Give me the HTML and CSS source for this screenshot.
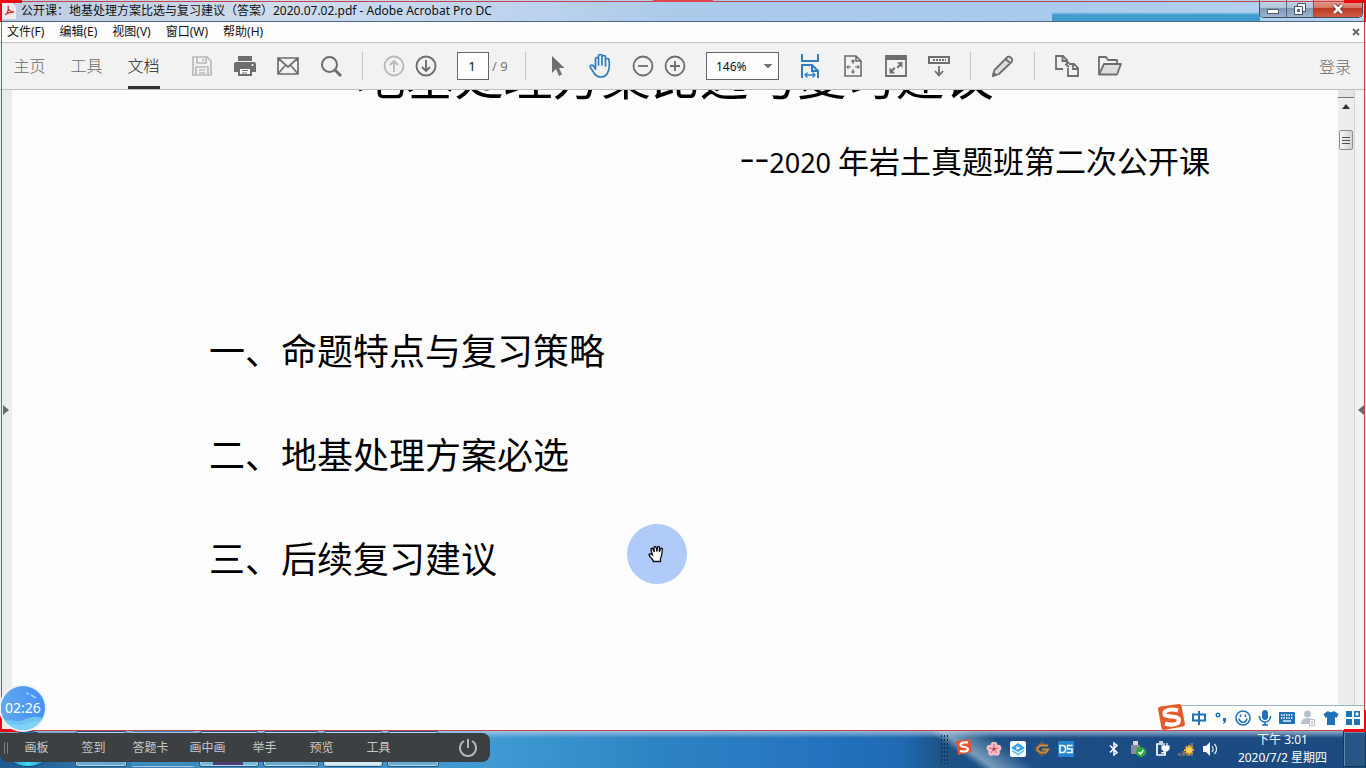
FILE: index.html
```html
<!DOCTYPE html>
<html lang="zh-CN">
<head>
<meta charset="utf-8">
<title>公开课:地基处理方案比选与复习建议 - Adobe Acrobat Pro DC</title>
<link rel="stylesheet" href="styles.css">
</head>
<body>
<div class="window">
  <header class="titlebar">
    <svg class="pdf-icon" width="14" height="16" viewBox="0 0 14 16"><path d="M0 0h10l4 4v12H0z" fill="#f6e9ec"/><path d="M3 12c3-2 4-6 3-9 0 4 2 6 6 6-4 0-7 1-9 3" fill="none" stroke="#d8343a" stroke-width="1.3"/></svg>
    <h1 class="title">公开课：地基处理方案比选与复习建议（答案）2020.07.02.pdf - Adobe Acrobat Pro DC</h1>
    <div class="win-controls">
      <button class="win-btn" aria-label="最小化"><svg width="14" height="12" viewBox="0 0 14 12"><rect x="1.500" y="6.500" width="11" height="4" fill="#fff" stroke="#4d5c70"/></svg></button>
      <button class="win-btn" aria-label="还原"><svg width="14" height="14" viewBox="0 0 14 14"><path d="M4.500 1.500h8v8h-8z" fill="#fff" stroke="#44536a"/><path d="M1.500 4.500h8v8h-8z" fill="#fff" stroke="#44536a"/><path d="M4.500 7.500h2v2h-2z" fill="#8ea5c2" stroke="#44536a"/></svg></button>
      <button class="win-btn close" aria-label="关闭"><svg width="14" height="12" viewBox="0 0 14 12"><path d="M3 2l8 8M11 2l-8 8" stroke="#6d2b2b" stroke-width="4.500"/><path d="M3 2l8 8M11 2l-8 8" stroke="#fff" stroke-width="2.600"/></svg></button>
    </div>
  </header>

  <nav class="menubar">
    <button>文件(F)</button><button>编辑(E)</button><button>视图(V)</button><button>窗口(W)</button><button>帮助(H)</button>
    <button class="doc-close" aria-label="关闭文档"><svg width="8" height="8" viewBox="0 0 8 8"><path d="M1 1l6 6M7 1L1 7" stroke="#666" stroke-width="1.800"/></svg></button>
  </nav>

  <div class="toolbar">
    <div class="tabs"><button>主页</button><button>工具</button><button class="active">文档</button></div>
    <div class="tools files">
      <button aria-label="保存"><svg width="22" height="22" viewBox="0 0 22 22" fill="none" stroke="#b9b9b9" stroke-width="1.700"><path d="M2 2h14l4 4v14H2zM6 2v6h9V2M5 20v-8h12v8M8 15h6M8 18h6M12 4v2"/></svg></button>
      <button aria-label="打印"><svg width="24" height="22" viewBox="0 0 24 22"><path d="M5 1h14v5H5zM3 7h18a2 2 0 0 1 2 2v8h-4v-4H5v4H1V9a2 2 0 0 1 2-2z" fill="#6e6e6e"/><path d="M6 13h12v7H6z" fill="#fff" stroke="#6e6e6e" stroke-width="2"/><path d="M9 15.500h6M9 18h5" stroke="#6e6e6e"/><circle cx="19.500" cy="10" r="1" fill="#fff"/></svg></button>
      <button aria-label="邮件"><svg width="24" height="22" viewBox="0 0 24 22" fill="none" stroke="#6e6e6e" stroke-width="1.700"><path d="M2 3h20v16H2zM2 3l10 9 10-9M2 19l7.500-9M22 19l-7.500-9"/></svg></button>
      <button aria-label="搜索"><svg width="22" height="22" viewBox="0 0 22 22" fill="none" stroke="#6e6e6e"><circle cx="9.500" cy="9.500" r="7.500" stroke-width="2"/><path d="M15 15l6 6" stroke-width="3"/></svg></button>
    </div>
    <span class="sep"></span>
    <div class="tools narrow">
      <button aria-label="上一页"><svg width="22" height="22" viewBox="0 0 22 22" fill="none" stroke="#b9b9b9" stroke-width="1.800"><circle cx="11" cy="11" r="9.500"/><path d="M11 17V6M7 10l4-4 4 4"/></svg></button>
      <button aria-label="下一页"><svg width="22" height="22" viewBox="0 0 22 22" fill="none" stroke="#6e6e6e" stroke-width="1.900"><circle cx="11" cy="11" r="9.500"/><path d="M11 5v11M7 12l4 4 4-4"/></svg></button>
    </div>
    <input class="page-input" id="page" type="text" value="1" aria-label="页码">
    <label class="page-total" for="page">/ 9</label>
    <span class="sep"></span>
    <div class="tools">
      <button aria-label="选择"><svg width="14" height="22" viewBox="0 0 14 22"><path d="M1 1v17l4-4 3 7 3-1.500-3-6.500h5.500z" fill="#6e6e6e"/></svg></button>
      <button aria-label="手形工具"><svg width="24" height="26" viewBox="0 0 24 26" fill="none" stroke="#2e7fc1" stroke-width="1.700" stroke-linejoin="round" stroke-linecap="round"><path d="M6.500 14V6c0-2 3-2 3 0v6V3c0-2 3.500-2 3.500 0v9V4c0-2 3.500-2 3.500 0v9V7c0-2 3.500-2 3.500 0 .8 6 .5 10-1.500 13-1.500 3-3.500 4-6.500 4-4 0-5.500-1.500-7-4L1.500 14.500C.5 12.500 3 11 4.500 13l2 3z"/></svg></button>
    </div>
    <div class="tools narrow">
      <button aria-label="缩小"><svg width="22" height="22" viewBox="0 0 22 22" fill="none" stroke="#6e6e6e" stroke-width="1.800"><circle cx="11" cy="11" r="9.500"/><path d="M6 11h10"/></svg></button>
      <button aria-label="放大"><svg width="22" height="22" viewBox="0 0 22 22" fill="none" stroke="#6e6e6e" stroke-width="1.800"><circle cx="11" cy="11" r="9.500"/><path d="M6 11h10M11 6v10"/></svg></button>
    </div>
    <select class="zoom" aria-label="缩放比例"><option>146%</option></select>
    <div class="tools views">
      <button aria-label="适合宽度"><svg width="20" height="26" viewBox="0 0 20 26" fill="none" stroke="#2e7fc1" stroke-width="2"><path d="M2 1v7h16V1M2 25V12h10l6 6v7M12 12v6h6"/><path d="M5 22h10M7.500 19.500L5 22l2.500 2.500M12.500 19.500L15 22l-2.500 2.500" stroke-width="1.300"/></svg></button>
      <button aria-label="适合页面"><svg width="18" height="22" viewBox="0 0 18 22" fill="none" stroke="#6e6e6e" stroke-width="1.600"><path d="M1 1h11l5 5v15H1zM12 1v5h5"/><path d="M9 5v4M7.500 6.500L9 5l1.500 1.500M9 18v-4M7.500 16.500L9 18l1.500-1.500M3 12h4M4.500 10.500L3 12l1.500 1.500M15 12h-4M13.500 10.500L15 12l-1.500 1.500" stroke-width="1.200"/></svg></button>
      <button aria-label="全屏"><svg width="22" height="22" viewBox="0 0 22 22"><path d="M1 1h20v20H1z" fill="none" stroke="#6e6e6e" stroke-width="1.800"/><path d="M1 1h20v4H1z" fill="#6e6e6e"/><path d="M17.500 7v6l-2-2-2.500 2.500-1.500-1.500L14 9.500 12 7.500zM4.500 18.500v-6l2 2L9 12l1.500 1.500L8 16l2 2.500z" fill="#6e6e6e"/></svg></button>
      <button aria-label="阅读模式"><svg width="22" height="22" viewBox="0 0 22 22" fill="none" stroke="#6e6e6e"><rect x="1" y="2" width="20" height="6" stroke-width="2"/><path d="M5 5h13" stroke-width="2" stroke-dasharray="2 1"/><path d="M11 11v10M7 16l4 4.500 4-4.500" stroke-width="1.800"/></svg></button>
    </div>
    <span class="sep"></span>
    <div class="tools"><button aria-label="批注"><svg width="22" height="22" viewBox="0 0 22 22" fill="#ddd" stroke="#6e6e6e" stroke-width="1.800" stroke-linejoin="round"><path d="M1 21l1.500-6L15 2.500c2-2.500 7 1.500 4.500 4.500L7 19zM13.500 4l5 4.500"/><path d="M1 21l.6-3 2.400 2z" fill="#6e6e6e"/></svg></button></div>
    <span class="sep"></span>
    <div class="tools">
      <button aria-label="转换"><svg width="24" height="22" viewBox="0 0 24 22" fill="none" stroke="#6e6e6e" stroke-width="1.800"><path d="M8 14H1V1h7l4 4v3M7.500 1v5H12M13 13v8h10v-8l-4-4h-5M18 9v5h5M14 7l-3 2.500 3 2.500"/></svg></button>
      <button aria-label="打开"><svg width="24" height="20" viewBox="0 0 24 20" fill="none" stroke="#6e6e6e" stroke-width="1.800" stroke-linejoin="round"><path d="M1 18V1h7l2 3h9v4"/><path d="M1 18.500L6 8h17l-4 10.500z" fill="#ddd"/></svg></button>
    </div>
    <a class="login" href="#login">登录</a>
  </div>

  <main class="viewer">
    <button class="gutter left" aria-label="展开导航窗格"><svg width="6" height="10" viewBox="0 0 6 10"><path d="M0 0l6 5-6 5z" fill="#6b6b6b"/></svg></button>
    <article class="page">
      <h2 class="doc-title">地基处理方案比选与复习建议</h2>
      <p class="subtitle"><span class="dashes">--</span><span class="year">2020</span> 年岩土真题班第二次公开课</p>
      <div class="outline">
        <p>一、命题特点与复习策略</p>
        <p>二、地基处理方案必选</p>
        <p>三、后续复习建议</p>
      </div>
    </article>
    <div class="scrollbar">
      <span class="split"></span>
      <button class="scroll-up" aria-label="向上滚动"><svg width="8" height="5" viewBox="0 0 8 5"><path d="M0 5l4-5 4 5z" fill="#333"/></svg></button>
      <span class="thumb"><svg width="8" height="9" viewBox="0 0 8 9"><path d="M0 1.500h8M0 4.500h8M0 7.500h8" stroke="#555"/></svg></span>
    </div>
    <button class="gutter right" aria-label="展开工具窗格"><svg width="6" height="10" viewBox="0 0 6 10"><path d="M6 0L0 5l6 5z" fill="#6b6b6b"/></svg></button>
  </main>
</div>

<footer class="taskbar">
  <div class="tasks">
    <span class="orb"></span><span class="task"></span><span class="task pale"></span><span class="task purple"></span><span class="task dim"></span><span class="task light"></span><span class="task"></span>
  </div>
  <div class="tray">
    <span class="grip"></span>
    <svg class="sogou-tray" width="18" height="18" viewBox="0 0 18 18"><path d="M1 3l14-2 2 13-14 3z" fill="#e8532b"/><path d="M13 4.500C9 4 5.500 4.500 5.500 7S13 8.500 13 11s-4 3-8 2" fill="none" stroke="#fff" stroke-width="2.200"/></svg>
    <div class="tray-icons">
      <svg width="16" height="16" viewBox="0 0 16 16"><g fill="#f7bcc4"><circle cx="8" cy="4" r="3.300"/><circle cx="12" cy="7" r="3.300"/><circle cx="10.500" cy="11.500" r="3.300"/><circle cx="5.500" cy="11.500" r="3.300"/><circle cx="4" cy="7" r="3.300"/></g><path d="M8 8V3M8 8l4-1M8 8l3 4M8 8l-3 4M8 8L3 7" stroke="#d8607b"/><circle cx="8" cy="8" r="1.500" fill="#b9354f"/></svg>
      <svg width="16" height="16" viewBox="0 0 16 16"><rect width="16" height="16" rx="2" fill="#fff"/><path d="M8 2l7 5-7 4-7-4z" fill="#35a2ea"/><path d="M2 9.500l6 4 6-4" fill="none" stroke="#73c7f4" stroke-width="2"/><path d="M6.500 5l4 2-4 2z" fill="#fff"/></svg>
      <svg width="16" height="16" viewBox="0 0 16 16"><path d="M8 0l5 4H3zM8 16l5-4H3zM0 8l3-4v8z" fill="#595b61"/><path d="M14 4.500H6L3.500 7v2L6 11.500h6l2-3H8" fill="none" stroke="#d9862b" stroke-width="2"/></svg>
      <svg width="16" height="16" viewBox="0 0 16 16"><rect width="16" height="16" rx="1" fill="#2685cf"/><path d="M2 4.500h2.500c4 0 4 7 0 7H2zM14.500 4.500h-5V8h4.500v3.500H8.500" fill="none" stroke="#fff" stroke-width="1.500"/></svg>
    </div>
    <div class="tray-icons system">
      <svg width="16" height="16" viewBox="0 0 16 16"><path d="M4 4.500l7 7L8 14V2l3 2.500-7 7" fill="none" stroke="#fff" stroke-width="1.500"/></svg>
      <svg width="16" height="16" viewBox="0 0 16 16"><path d="M3 0h5v4H3z" fill="#d5d5d5"/><path d="M1 4h9v9H1z" fill="#888f98"/><circle cx="11" cy="11" r="5" fill="#24a93a"/><path d="M8.500 11l2 2 3-4" fill="none" stroke="#fff" stroke-width="1.500"/></svg>
      <svg width="16" height="16" viewBox="0 0 16 16" fill="none" stroke="#fff" stroke-width="1.700"><path d="M9 3H3v11h8v-3M5 1h4"/><path d="M8 5h7v3l-2 2h-3L8 8zM10 2v3M13 2v3M11 10v2H7" fill="#fff" stroke-width="1.200"/></svg>
      <svg width="18" height="16" viewBox="0 0 18 16"><path d="M1 12h3v3H1zM5 10h3v5H5zM9 6h3v9H9zM13 2h3v13h-3z" fill="#69707c"/><path d="M12 4v10M7 9h10M8.500 5.500l7 7M15.500 5.500l-7 7" stroke="#eda321" stroke-width="2"/><circle cx="12" cy="9" r="3" fill="#ffd15c"/></svg>
      <svg width="16" height="16" viewBox="0 0 16 16"><path d="M1 5h3l4-4v14l-4-4H1z" fill="#fff"/><path d="M10 5c1.500 2 1.500 4 0 6M12.500 3c2.500 3 2.500 7 0 10" fill="none" stroke="#e3edf5" stroke-width="1.200"/></svg>
    </div>
    <div class="clock"><span>下午 3:01</span><span>2020/7/2 星期四</span></div>
    <button class="show-desktop" aria-label="显示桌面"></button>
  </div>
</footer>

<div class="frame"><i class="corner tl"></i><i class="corner tr"></i><i class="corner bl"></i><i class="corner br"></i><i class="top-mark"></i></div>

<div class="pointer"><svg width="18" height="18" viewBox="0 0 18 18"><path d="M5.500 16.500c-.5-2-2-3.500-4-5.500-1-1.500 0-3 1.800-1.800L4.500 10 3 5c-.3-2 1.500-2.300 2-.8L6.300 7 6 3c0-2 2-2 2.300 0L9 6.500 9.500 2.500c.2-1.700 2-1.500 2 .2l-.1 4 1-2.700c.6-1.500 2.200-1 2 .5-.5 3-.2 6-1.900 9v3z" fill="#fff" stroke="#111" stroke-width="1.300"/></svg></div>

<div class="timer"><svg class="timer-art" width="44" height="44" viewBox="0 0 44 44"><defs><clipPath id="disc"><circle cx="22" cy="22" r="22"/></clipPath><linearGradient id="sky" x1="0" x2="1"><stop stop-color="#62a8ef"/><stop offset="1" stop-color="#4590f3"/></linearGradient></defs><g clip-path="url(#disc)"><path d="M0 0h44v44H0z" fill="url(#sky)"/><path d="M0 34c12-1 14 3 22 0s12-5 22-1v11H0z" fill="#6fc6f5"/><path d="M0 36c8 0 12 4 20 3s12-5 24-4v10H0z" fill="#8bdcf9" opacity=".6"/><path d="M25 7l3 1M30 9l5 3" stroke="#a9d4ff" stroke-width="1.500"/></g></svg><span>02:26</span></div>

<div class="ime">
  <svg class="ime-logo" width="28" height="26" viewBox="0 0 28 26"><path d="M1 5q0-2 2-2.500L22 0q2 0 2.500 2L28 20q0 2-2 2.500L7 26q-2 0-2.500-2z" fill="#e55a2b"/><path d="M21 6.500C14 4.500 7 6 7.500 10S22 11 22 16s-8 5.500-14 3.500" fill="none" stroke="#fff" stroke-width="4"/></svg>
  <div class="ime-icons">
    <button aria-label="中文"><svg width="16" height="16" viewBox="0 0 16 16" fill="none" stroke="#1e73b8" stroke-width="2"><path d="M2 4.500h12v6H2zM8 1v14"/></svg></button>
    <button aria-label="标点"><svg width="16" height="16" viewBox="0 0 16 16"><circle cx="5" cy="5" r="1.800" fill="none" stroke="#1e73b8" stroke-width="1.400"/><path d="M10 8h3v3q0 2-3 3l1-3h-1z" fill="#1e73b8"/></svg></button>
    <button aria-label="表情"><svg width="16" height="16" viewBox="0 0 16 16"><circle cx="8" cy="8" r="7" fill="none" stroke="#1e73b8" stroke-width="1.600"/><path d="M4 8.500c1 5 7 5 8 0M5.500 4.500v2.500M10.500 4.500v2.500" fill="none" stroke="#1e73b8" stroke-width="1.600"/></svg></button>
    <button aria-label="语音"><svg width="14" height="16" viewBox="0 0 14 16"><rect x="4" y="0" width="6" height="10" rx="3" fill="#1e73b8"/><path d="M1.500 6c0 8 11 8 11 0M7 12v3M4 15h6" fill="none" stroke="#1e73b8" stroke-width="1.600"/></svg></button>
    <button aria-label="软键盘"><svg width="16" height="12" viewBox="0 0 16 12"><rect width="16" height="12" rx="1" fill="#1e73b8"/><path d="M2 3h12M2 6h12" stroke="#fff" stroke-width="1.500" stroke-dasharray="1.500 1"/><path d="M4 9h8" stroke="#fff" stroke-width="1.300"/></svg></button>
    <button aria-label="用户"><svg width="16" height="16" viewBox="0 0 16 16"><circle cx="6.500" cy="4" r="3.500" fill="#b7c0ca"/><path d="M0 14q0-6 6.500-6T13 14z" fill="#b7c0ca"/><rect x="8.500" y="9.500" width="5" height="6" fill="#fff" stroke="#b7c0ca"/><path d="M11 11v3" stroke="#9aa6b3"/></svg></button>
    <button aria-label="皮肤"><svg width="16" height="16" viewBox="0 0 16 16"><path d="M5 1q3 2.500 6 0l4.500 3-2 4L12 7v8H4V7L2.500 8l-2-4z" fill="#1e73b8"/></svg></button>
    <button aria-label="工具箱"><svg width="14" height="14" viewBox="0 0 14 14"><path d="M0 0h6v6H0zM0 8h6v6H0zM8 8h6v6H8z" fill="#1e73b8"/><path d="M8.800.8h4.400v4.400H8.800z" fill="none" stroke="#1e73b8" stroke-width="1.600"/></svg></button>
  </div>
</div>

<div class="dock">
  <span class="dock-grip"></span>
  <button>画板</button><button>签到</button><button>答题卡</button><button>画中画</button><button>举手</button><button>预览</button><button>工具</button>
  <button class="power" aria-label="退出"><svg width="20" height="20" viewBox="0 0 20 20" fill="none" stroke="#b5b8ba" stroke-width="2"><path d="M6 3a8 8 0 1 0 8 0M10 1v9"/></svg></button>
</div>
</body>
</html>
```
FILE: styles.css
```css
* { box-sizing: border-box; }
body {
  margin: 0;
  height: 100vh;
  display: flex;
  flex-direction: column;
  position: relative;
  overflow: hidden;
  font: 12px/16px "Noto Sans", "Noto Sans CJK SC", sans-serif;
  color: #111;
  background: #fdfdfd;
}
button { border: 0; padding: 0; margin: 0; background: none; font: inherit; color: inherit; }
svg { display: block; flex: none; }
p, h1, h2 { margin: 0; font-weight: 400; }

.window { flex: 1; min-height: 0; display: flex; flex-direction: column; }

.titlebar {
  height: 22px;
  flex: none;
  display: flex;
  align-items: center;
  gap: 5px;
  padding: 0 3px 0 2px;
  border-bottom: 1px solid #4c6684;
  background:
    linear-gradient(rgba(63, 156, 205, 0), #3f9ccd 3px) right 106px bottom 0 / 208px 9px no-repeat,
    linear-gradient(90deg, #bccbe0 0, #cfdced 20%, #bdd3ed 38%, #abcbeb 50%, #a7caed 75%, #b6d3f0 100%);
}
.title { flex: 1; font-size: 12px; line-height: 20px; white-space: nowrap; }
.win-controls {
  align-self: flex-start;
  display: flex;
  height: 18px;
  border: 1px solid #3d4e66;
  border-top: 0;
  border-radius: 0 0 5px 5px;
  overflow: hidden;
}
.win-btn {
  width: 27px;
  display: grid;
  place-items: center;
  border-right: 1px solid #53647c;
  background: linear-gradient(#c6d8ea 0, #afc5dc 45%, #8299b5 50%, #9bb4cf 100%);
}
.win-btn.close { width: 48px; border: 0; background: linear-gradient(#e6a598 0, #d57764 45%, #b93a25 50%, #cf5e41 100%); }

.menubar {
  height: 21px;
  flex: none;
  display: flex;
  align-items: center;
  gap: 15px;
  padding: 0 6px 0 7px;
  background: #fdfdfd;
  border-bottom: 1px solid #c4c4c4;
}
.doc-close { margin-left: auto; }

.toolbar {
  height: 47px;
  flex: none;
  display: flex;
  align-items: center;
  padding-left: 1px;
  background: #f2f2f2;
  border-bottom: 1px solid #bfbfbf;
}
.tabs { display: flex; align-self: stretch; font-size: 16px; color: #6b6b6b; font-weight: 300; }
.tabs button { width: 57px; padding-top: 2px; border-bottom: 3px solid transparent; }
.tabs .active { color: #222; background: linear-gradient(#333, #333) center bottom / 32px 3px no-repeat border-box; }
.tools { display: flex; }
.tools button { width: 43px; height: 32px; display: grid; place-items: center; }
.tools.narrow { padding: 0 15px 0 5px; }
.tools.narrow button { width: 32px; }
.files { margin-left: 8px; }
.views { margin-left: 9px; }
.sep { width: 1px; height: 28px; margin: 0 10px; background: #c3c3c3; }
.page-input {
  width: 32px;
  height: 28px;
  padding: 0 2px 0 0;
  border: 1px solid #666;
  background: #fff;
  text-align: center;
  font: 13px "Noto Sans", sans-serif;
  color: #111;
}
.page-total { width: 26px; padding-left: 3px; font-size: 13px; color: #777; white-space: nowrap; }
.zoom {
  appearance: none;
  width: 73px;
  height: 28px;
  padding: 0 0 0 9px;
  border: 1px solid #666;
  border-radius: 0;
  font: 12px "Noto Sans", sans-serif;
  color: #111;
  background-color: #fdfdfd;
  background-image: linear-gradient(to top right, transparent 50%, #777 50%), linear-gradient(to top left, transparent 50%, #777 50%);
  background-size: 4px 5px;
  background-position: right 10px center, right 6px center;
  background-repeat: no-repeat;
}
.login { margin-left: auto; padding: 2px 15px 0 0; font-size: 16px; font-weight: 300; color: #6b6b6b; text-decoration: none; }

.viewer { flex: 1; min-height: 0; display: flex; overflow: hidden; }
.gutter { width: 12px; flex: none; display: flex; align-items: center; background: #ececec; }
.gutter.left { justify-content: center; }
.gutter.right { width: 11px; justify-content: center; background: #f3f3f3; }
.page { flex: 1; min-width: 0; overflow: hidden; color: #000; font-family: "Noto Sans CJK SC", sans-serif; }
.doc-title { margin-top: -46px; font-size: 49px; line-height: 60px; text-align: center; white-space: nowrap; }
.subtitle { margin-top: 38px; padding-right: 128px; font-size: 31px; line-height: 36px; text-align: right; white-space: nowrap; }
.dashes { font: 300 46px/0 "Noto Sans", sans-serif; }
.year { font: 27px/1 "Noto Sans", sans-serif; }
.outline { padding: 119px 0 0 197px; font-size: 36px; line-height: 104px; white-space: nowrap; }

.scrollbar { width: 17px; flex: none; display: flex; flex-direction: column; align-items: center; background: #ededed; border-right: 1px solid #d2d2d2; }
.split { width: 16px; height: 8px; background: #e4e4e4; border-bottom: 1px solid #777; }
.scroll-up { width: 16px; height: 17px; display: grid; place-items: center; }
.thumb { width: 14px; height: 20px; margin-top: 15px; display: grid; place-items: center; border: 1px solid #8b8b8b; border-radius: 2px; background: linear-gradient(90deg, #f6f6f6, #d3d3d3); }

.taskbar {
  height: 38px;
  flex: none;
  display: flex;
  justify-content: space-between;
  background:
    linear-gradient(rgba(205, 222, 240, .75), rgba(180, 205, 230, .35) 5px, transparent 8px),
    linear-gradient(35deg, transparent 69%, rgba(170, 195, 215, .65) 70%, transparent 73%),
    linear-gradient(90deg, #1c5b91 0, #3d8cc2 14%, #3f9bd2 36%, #2d84c4 48%, #2473be 60%, #1f6ab2 66%, #1d5286 69%, #1b4c84 80%, #1b4a80 100%);
}
.tasks { display: flex; gap: 4px; padding: 1px 0 1px 4px; }
.orb { width: 48px; border-radius: 50%; margin-right: 19px; background: radial-gradient(circle at 50% 95%, #43e0f5, #1b6ca9 60%); border: 1px solid #164a75; }
.task { width: 52px; border: 1px solid #285477; border-radius: 3px; box-shadow: inset 0 0 0 1px #b8daed; background: linear-gradient(#d9e7f3, #5da5ce); }
.task.pale { width: 64px; border-color: transparent; background: linear-gradient(#a9c6e3, #3487bd); box-shadow: none; }
.task.purple { width: 60px; background: linear-gradient(90deg, #77b7dc 22%, #4e3c7a 22%, #4e3c7a 75%, #77b7dc 75%); }
.task.dim { width: 56px; }
.task.light { width: 60px; background: #d6eaf2; }
.tray { display: flex; align-items: center; color: #fff; }
.grip { width: 8px; height: 30px; background: radial-gradient(circle, #0f2d4d 1px, transparent 1px) 0 0 / 3px 4px; }
.sogou-tray { margin: 0 9px 4px 7px; }
.tray-icons { display: flex; }
.tray-icons svg { margin: 0 4px; }
.tray-icons svg[width="18"] { margin: 0 3px; }
.system { margin-left: 24px; }
.clock { width: 121px; display: flex; flex-direction: column; align-items: center; line-height: 18px; }
.show-desktop { width: 23px; height: 36px; border: 1px solid #153555; box-shadow: inset 1px 1px 0 #6789a9; background: #285687; }

.frame { position: absolute; inset: 1px 1px 37px 1px; border: 1px solid #c9434b; pointer-events: none; }
.corner { position: absolute; width: 22px; height: 22px; border: 0 solid #e80b12; }
.tl { left: -2px; top: -2px; border-width: 3px 0 0 2px; }
.tr { right: -2px; top: -2px; border-width: 3px 2px 0 0; }
.bl { left: -2px; bottom: -2px; border-width: 0 0 3px 2px; }
.br { right: -2px; bottom: -2px; border-width: 0 2px 3px 0; }
.top-mark { position: absolute; left: calc(50% - 30px); top: -2px; width: 60px; height: 2px; background: #de4650; }

.pointer { position: absolute; left: 627px; top: 524px; width: 60px; height: 60px; border-radius: 50%; display: grid; place-items: center; background: #b0cbfa; }
.timer { position: absolute; left: 1px; bottom: 38px; width: 44px; height: 44px; display: grid; place-items: center; border-radius: 50%; box-shadow: 0 0 0 2px #eef3fa; color: #fff; font-size: 14px; }
.timer > * { grid-area: 1 / 1; }

.ime { position: absolute; right: 2px; bottom: 39px; height: 24px; display: flex; align-items: center; background: #fff; border-top: 1px solid #9bb6c8; }
.ime-logo { margin-top: -2px; margin-left: -14px; }
.ime-icons { display: flex; padding-left: 3px; }
.ime-icons button { width: 22px; height: 18px; display: grid; place-items: center; }

.dock { position: absolute; left: 0; bottom: 6px; width: 490px; height: 29px; display: flex; align-items: center; padding: 0 12px 0 4px; border-radius: 0 8px 8px 8px; background: #3c4043; color: #c7c9ca; }
.dock button { width: 57px; }
.dock-grip { width: 4px; height: 12px; border: 1px solid #7b7e80; border-width: 0 1px; }
.dock .power { width: 20px; margin-left: auto; }
```
